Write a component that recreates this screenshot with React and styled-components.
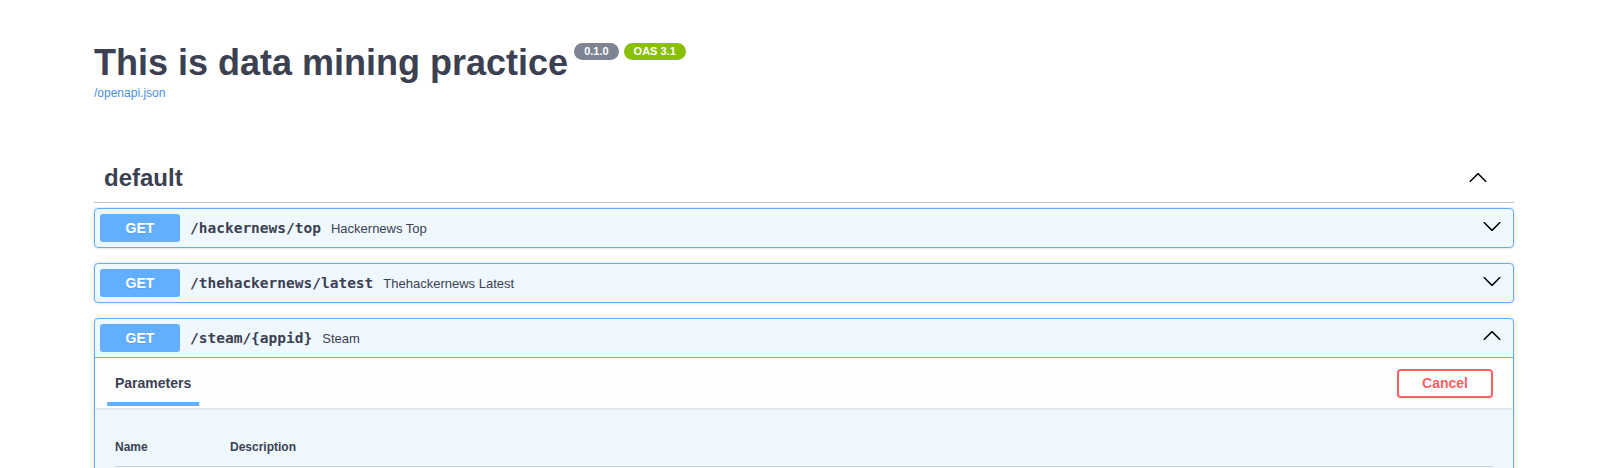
import React from 'react';
import styled, { createGlobalStyle } from 'styled-components';

const GlobalStyle = createGlobalStyle`
  html, body {
    margin: 0;
    padding: 0;
    background: #fff;
    overflow: hidden;
  }
  body {
    font-family: "Liberation Sans", Arial, sans-serif;
    color: #3b4151;
  }
`;

const Wrapper = styled.div`
  width: 1420px;
  margin-left: 94px;
`;

const Info = styled.div`
  padding-top: 42px;
  margin-bottom: 54px;
`;

const Title = styled.h2`
  display: flex;
  align-items: flex-start;
  margin: 0;
  font-size: 36px;
  line-height: 41px;
  font-weight: 700;
  color: #3b4151;
`;

const Badge = styled.small`
  display: inline-block;
  margin: 1px 0 0 ${({ $stamp }) => ($stamp ? 5 : 6)}px;
  padding: 2px 10px;
  border-radius: 57px;
  background: ${({ $stamp }) => ($stamp ? '#89bf04' : '#7d8492')};
  color: #fff;
  font-size: 11px;
  line-height: 13px;
  font-weight: 700;
`;

const SpecLink = styled.a`
  display: block;
  margin-top: 3px;
  font-size: 12px;
  line-height: 14px;
  color: #4990e2;
  text-decoration: none;
`;

const TagHeading = styled.h3`
  display: flex;
  align-items: center;
  margin: 0 0 5px;
  padding: 10px 20px 10px 10px;
  border-bottom: 1px solid rgba(59, 65, 81, 0.3);
  font-size: 24px;
  line-height: 28px;
  font-weight: 700;
  color: #3b4151;
`;

const TagName = styled.span`
  flex: 1;
`;

const ArrowButton = styled.button`
  display: flex;
  align-items: center;
  padding: 0 6px ${({ $lift }) => ($lift ? 5 : 0)}px;
  border: none;
  background: none;
  > svg {
    width: 20px;
    height: 20px;
    transform: ${({ $up }) => ($up ? 'rotate(180deg)' : 'none')};
  }
`;

const Opblock = styled.div`
  margin-bottom: 15px;
  border: 1px solid #61affe;
  border-radius: 4px;
  background: rgba(97, 175, 254, 0.1);
  box-shadow: 0 0 3px rgba(0, 0, 0, 0.19);
`;

const Summary = styled.div`
  display: flex;
  align-items: center;
  padding: 5px;
  border-bottom: ${({ $open }) => ($open ? '1px solid #61affe' : 'none')};
`;

const Method = styled.span`
  min-width: 80px;
  padding: 6px 0;
  border-radius: 3px;
  background: #61affe;
  color: #fff;
  font-size: 14px;
  line-height: 16px;
  font-weight: 700;
  text-align: center;
  text-shadow: 0 1px 0 rgba(0, 0, 0, 0.1);
`;

const Path = styled.span`
  padding: 0 10px;
  font-family: "DejaVu Sans Mono", "Liberation Mono", monospace;
  font-size: 14.5px;
  font-weight: 700;
  color: #3b4151;
`;

const SummaryText = styled.span`
  flex: 1;
  font-size: 13px;
  color: #3b4151;
`;

const SectionHeader = styled.div`
  position: relative;
  z-index: 1;
  display: flex;
  align-items: center;
  justify-content: space-between;
  box-sizing: border-box;
  min-height: 50px;
  padding: 8px 20px;
  background: rgba(255, 255, 255, 0.8);
  box-shadow: 0 1px 2px rgba(0, 0, 0, 0.1);
`;

const TabTitle = styled.h4`
  margin: 0;
  font-size: 14px;
  line-height: 16px;
  font-weight: 700;
  color: #3b4151;
  > span {
    position: relative;
  }
  > span::after {
    content: "";
    position: absolute;
    left: 50%;
    bottom: -15px;
    width: 120%;
    height: 4px;
    background: #61affe;
    transform: translateX(-50%);
  }
`;

const CancelButton = styled.button`
  padding: 5px 23px;
  border: 2px solid #ff6060;
  border-radius: 4px;
  background: transparent;
  color: #ff6060;
  font-family: "Liberation Sans", Arial, sans-serif;
  font-size: 14px;
  line-height: 15px;
  font-weight: 700;
  box-shadow: 0 1px 2px rgba(0, 0, 0, 0.1);
`;

const Body = styled.div`
  padding: 20px;
`;

const ParamTable = styled.table`
  width: 100%;
  border-collapse: collapse;
  th {
    padding: 12px 0;
    border-bottom: 1px solid rgba(59, 65, 81, 0.2);
    text-align: left;
    font-size: 12px;
    line-height: 14px;
    font-weight: 700;
    color: #3b4151;
  }
`;

const NameHead = styled.th`
  width: 115px;
`;

const Chevron = () => (
  <svg viewBox="0 0 20 20" aria-hidden="true">
    <path d="M17.418 6.109c.272-.268.709-.268.979 0s.271.701 0 .969l-7.908 7.83c-.27.268-.707.268-.979 0l-7.908-7.83c-.27-.268-.27-.701 0-.969.271-.268.709-.268.979 0L10 13.25l7.418-7.141z" />
  </svg>
);

const endpoints = [
  { path: '/hackernews/top', summary: 'Hackernews Top' },
  { path: '/thehackernews/latest', summary: 'Thehackernews Latest' },
  { path: '/steam/{appid}', summary: 'Steam', open: true }
];

const Operation = ({ path, summary, open }) => (
  <Opblock>
    <Summary $open={open}>
      <Method>GET</Method>
      <Path>{path}</Path>
      <SummaryText>{summary}</SummaryText>
      <ArrowButton $up={open} $lift>
        <Chevron />
      </ArrowButton>
    </Summary>
    {open && (
      <>
        <SectionHeader>
          <TabTitle>
            <span>Parameters</span>
          </TabTitle>
          <CancelButton>Cancel</CancelButton>
        </SectionHeader>
        <Body>
          <ParamTable>
            <thead>
              <tr>
                <NameHead>Name</NameHead>
                <th>Description</th>
              </tr>
            </thead>
          </ParamTable>
        </Body>
      </>
    )}
  </Opblock>
);

const App = () => (
  <>
    <GlobalStyle />
    <Wrapper>
      <Info>
        <Title>
          This is data mining practice
          <Badge>0.1.0</Badge>
          <Badge $stamp>OAS 3.1</Badge>
        </Title>
        <SpecLink href="#">/openapi.json</SpecLink>
      </Info>
      <TagHeading>
        <TagName>default</TagName>
        <ArrowButton $up>
          <Chevron />
        </ArrowButton>
      </TagHeading>
      {endpoints.map((op) => (
        <Operation key={op.path} {...op} />
      ))}
    </Wrapper>
  </>
);

export default App;
